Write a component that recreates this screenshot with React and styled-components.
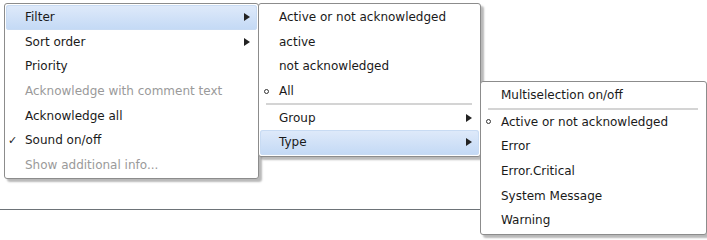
import React from "react";
import styled, { createGlobalStyle } from "styled-components";

const Global = createGlobalStyle`
  html, body { margin: 0; padding: 0; background: #fff; }
  body { font-family: "DejaVu Sans", Verdana, sans-serif; }
`;

const Page = styled.div`
  position: relative;
  width: 707px;
  height: 240px;
  overflow: hidden;
`;

const Content = styled.div`
  height: 209px;
  border-bottom: 1px solid #6d7378;
`;

const Menu = styled.ul`
  position: absolute;
  left: ${(p) => p.$x}px;
  top: ${(p) => p.$y}px;
  width: ${(p) => p.$w}px;
  margin: 0;
  padding: 1px;
  list-style: none;
  background: #fff;
  border: 1px solid #8c8c8c;
  border-radius: 3px;
  box-shadow: 3px 3px 2px rgba(0, 0, 0, 0.28);
  box-sizing: border-box;
  display: flex;
  flex-direction: column;
`;

const Item = styled.li`
  height: 24.6px;
  display: flex;
  align-items: center;
  padding: 0 7px 0 2px;
  font-size: 12px;
  color: ${(p) => (p.$disabled ? "#9a9a9a" : "#1a1a1a")};
  border-radius: 3px;
  box-sizing: border-box;
  white-space: nowrap;
  ${(p) =>
    p.$active &&
    `
    background: linear-gradient(to bottom, #dfeafa, #c3d9f5);
    box-shadow: inset 0 0 0 1px #c8dbf3;
  `}
`;

const Lead = styled.span`
  width: 17px;
  flex: none;
  display: flex;
  align-items: center;
  font-size: 11px;
  color: #222;
`;

const Label = styled.span`
  flex: 1;
`;

const Dot = styled.span`
  margin-left: 2px;
  width: 3px;
  height: 3px;
  border: 1px solid #333;
  border-radius: 50%;
`;

const Arrow = styled.span`
  flex: none;
  width: 0;
  height: 0;
  border-top: 4px solid transparent;
  border-bottom: 4px solid transparent;
  border-left: 6px solid #222;
`;

const Sep = styled.li`
  height: 2px;
  margin: 0 7px 0 6px;
  background: #d4d4d4;
`;

function MenuItem({ lead, arrow, children, ...rest }) {
  return (
    <Item {...rest}>
      <Lead>{lead}</Lead>
      <Label>{children}</Label>
      {arrow && <Arrow />}
    </Item>
  );
}

export default function App() {
  return (
    <>
      <Global />
      <Page>
        <Content />
        <Menu $x={4} $y={3} $w={255}>
          <MenuItem $active arrow>Filter</MenuItem>
          <MenuItem arrow>Sort order</MenuItem>
          <MenuItem>Priority</MenuItem>
          <MenuItem $disabled>Acknowledge with comment text</MenuItem>
          <MenuItem>Acknowledge all</MenuItem>
          <MenuItem lead="✓">Sound on/off</MenuItem>
          <MenuItem $disabled>Show additional info...</MenuItem>
        </Menu>
        <Menu $x={258} $y={3} $w={223}>
          <MenuItem>Active or not acknowledged</MenuItem>
          <MenuItem>active</MenuItem>
          <MenuItem>not acknowledged</MenuItem>
          <MenuItem lead={<Dot />}>All</MenuItem>
          <Sep />
          <MenuItem arrow>Group</MenuItem>
          <MenuItem $active arrow>Type</MenuItem>
        </Menu>
        <Menu $x={480} $y={81} $w={227}>
          <MenuItem>Multiselection on/off</MenuItem>
          <Sep />
          <MenuItem lead={<Dot />}>Active or not acknowledged</MenuItem>
          <MenuItem>Error</MenuItem>
          <MenuItem>Error.Critical</MenuItem>
          <MenuItem>System Message</MenuItem>
          <MenuItem>Warning</MenuItem>
        </Menu>
      </Page>
    </>
  );
}
